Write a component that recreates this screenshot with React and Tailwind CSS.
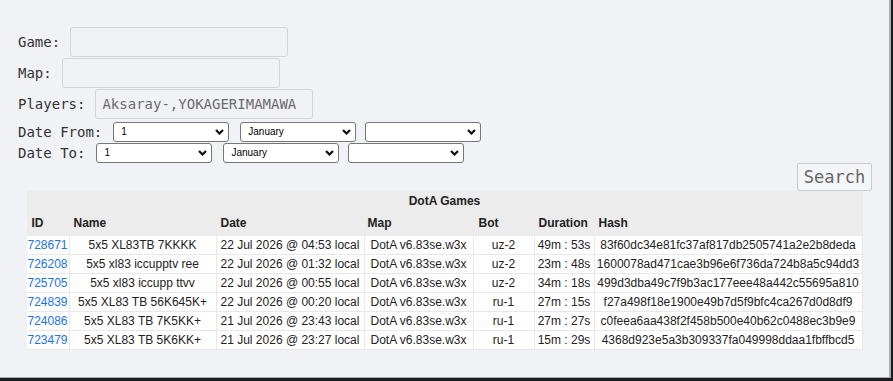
import React from "react";

const rows = [
  ["728671", "5x5 XL83TB 7KKKK", "22 Jul 2026 @ 04:53 local", "DotA v6.83se.w3x", "uz-2", "49m : 53s", "83f60dc34e81fc37af817db2505741a2e2b8deda"],
  ["726208", "5x5 xl83 iccupptv ree", "22 Jul 2026 @ 01:32 local", "DotA v6.83se.w3x", "uz-2", "23m : 48s", "1600078ad471cae3b96e6f736da724b8a5c94dd3"],
  ["725705", "5x5 xl83 iccupp ttvv", "22 Jul 2026 @ 00:55 local", "DotA v6.83se.w3x", "uz-2", "34m : 18s", "499d3dba49c7f9b3ac177eee48a442c55695a810"],
  ["724839", "5x5 XL83 TB 56K645K+", "22 Jul 2026 @ 00:20 local", "DotA v6.83se.w3x", "ru-1", "27m : 15s", "f27a498f18e1900e49b7d5f9bfc4ca267d0d8df9"],
  ["724086", "5x5 XL83 TB 7K5KK+", "21 Jul 2026 @ 23:43 local", "DotA v6.83se.w3x", "ru-1", "27m : 27s", "c0feea6aa438f2f458b500e40b62c0488ec3b9e9"],
  ["723479", "5x5 XL83 TB 5K6KK+", "21 Jul 2026 @ 23:27 local", "DotA v6.83se.w3x", "ru-1", "15m : 29s", "4368d923e5a3b309337fa049998ddaa1fbffbcd5"],
];

const cols = "grid grid-cols-[43px_147px_148px_109px_61px_60px_268px]";

function Select({ value, ml }) {
  return (
    <div className={`relative ${ml} w-[116px] h-[20px]`}>
      <select
        defaultValue={value}
        className="block appearance-none w-full h-full bg-white border border-[#767676] rounded-[3px] pl-[7px] text-[10px] leading-none text-black font-['Liberation_Sans',Arial,sans-serif] outline-none"
      >
        <option>{value}</option>
      </select>
      <svg
        className="absolute right-[5px] top-[7px] pointer-events-none"
        width="9"
        height="6"
        viewBox="0 0 9 6"
        fill="none"
      >
        <path d="M1 1l3.5 3.5L8 1" stroke="#111" strokeWidth="2.2" />
      </svg>
    </div>
  );
}

function DateRow({ label, mt }) {
  return (
    <div className={`flex items-center h-[20px] leading-[20px] ${mt}`}>
      <span className="whitespace-pre">{label}</span>
      <Select value="1" ml="ml-[11px]" />
      <Select value="January" ml="ml-[11px]" />
      <Select value="" ml="ml-[9px]" />
    </div>
  );
}

export default function App() {
  const inputCls =
    "block ml-[10px] w-[218px] h-[30px] border border-[#d4d5d8] rounded-[3px] bg-[#f1f2f6] px-[6px] text-[14px] text-[#6b6b6b] font-['DejaVu_Sans_Mono',monospace] outline-none";
  return (
    <div className="w-[893px] h-[381px] bg-[#1c1c1c] overflow-hidden">
      <div className="w-[891px] h-[378px] bg-[#f1f2f6] border-r-2 border-b border-[#a9aeb6]">
        <div className="pl-[18px] pt-[27px] font-['DejaVu_Sans_Mono',monospace] text-[14px] text-[#333]">
          <div className="flex items-center h-[30px]">
            <span>Game:</span>
            <input className={inputCls} />
          </div>
          <div className="flex items-center h-[30px] mt-px">
            <span>Map:</span>
            <input className={inputCls} />
          </div>
          <div className="flex items-center h-[30px] mt-px">
            <span>Players:</span>
            <input className={inputCls} defaultValue="Aksaray-,YOKAGERIMAMAWA" />
          </div>
          <DateRow label="Date From:" mt="mt-[3px]" />
          <DateRow label="Date To:" mt="mt-px" />
        </div>
        <div className="flex justify-end pr-[17px]">
          <button className="w-[75px] h-[28px] border border-[#c9cacd] rounded-[2px] bg-[#f4f5f7] text-[17px] text-[#666] font-['DejaVu_Sans_Mono',monospace] leading-none">
            Search
          </button>
        </div>
        <div className="mx-auto w-[836px] font-['Liberation_Sans',Arial,sans-serif] text-[12px] text-[#222]">
          <div className="bg-[#ececec]">
            <div className="h-[19px] flex items-center justify-center font-bold">DotA Games</div>
            <div className={`${cols} h-[26px] items-center font-bold`}>
              <div className="pl-[5px]">ID</div>
              <div className="pl-[4px]">Name</div>
              <div className="pl-[4px]">Date</div>
              <div className="pl-[3px]">Map</div>
              <div className="pl-[5px]">Bot</div>
              <div className="pl-[4px]">Duration</div>
              <div className="pl-[4px]">Hash</div>
            </div>
          </div>
          {rows.map((r) => (
            <div key={r[0]} className={`${cols} h-[19px]`}>
              {r.map((c, i) => (
                <div
                  key={i}
                  className="bg-white border-r border-b border-[#e8e8e8] flex items-center justify-center whitespace-nowrap overflow-hidden"
                >
                  {i === 0 ? (
                    <a href="#" className="text-[#1a73e8]">{c}</a>
                  ) : (
                    c
                  )}
                </div>
              ))}
            </div>
          ))}
        </div>
      </div>
    </div>
  );
}
